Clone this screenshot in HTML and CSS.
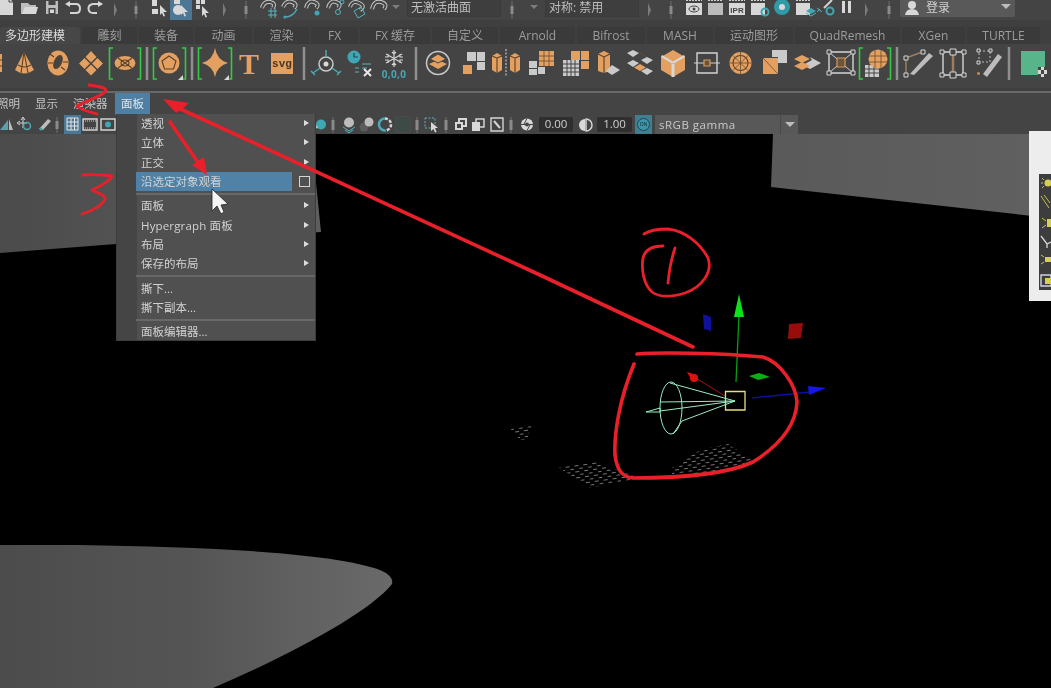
FILE: index.html
```html
<!DOCTYPE html>
<html lang="zh">
<head>
<meta charset="utf-8">
<title>Maya</title>
<link rel="stylesheet" href="styles.css">
</head>
<body>
<div class="app">

<div class="status">
  <svg class="ic w18" viewBox="0 0 18 20"><path class="wf" d="M0 -2H9L13 2V15H0Z"/><path class="dk" d="M9 -2V2H13"/></svg>
  <svg class="ic w24" viewBox="0 0 24 20"><path class="gf" d="M3 14V3H10L12 5H18V14Z"/><path class="wf" d="M4 14L7 7H20L18 14Z"/></svg>
  <svg class="ic w20" viewBox="0 0 20 20"><path class="gf" d="M4 1H16V14H4Z"/><path class="dkf" d="M6.500 1H13.500V5H6.500Z M6.500 8H13.500V14H6.500Z"/><path class="wf" d="M8 9.500H12V13H8Z"/></svg>
  <svg class="ic w22" viewBox="0 0 22 20"><path class="ln2" d="M6 4H14Q18 4 18 8.500T14 13H8"/><path class="wf" d="M3 4L8 1V7Z"/></svg>
  <svg class="ic w22" viewBox="0 0 22 20"><path class="ln2" d="M18 4H9Q4 5 4.500 9T9 13H13"/><path class="wf" d="M19 4L14 1V7Z"/></svg>
  <svg class="ic w18" viewBox="0 0 18 20"><path class="hf" d="M8 3L11 10L8 17Z"/></svg>
  <svg class="ic w24" viewBox="0 0 24 20"><path class="hb" d="M12 1V19"/><path class="hb2" d="M12 6V14"/></svg>
  <svg class="ic w22" viewBox="0 0 22 20"><path class="wf" d="M4 0H9V6H4Z"/><path class="wf" d="M4 9H10V14H4Z"/><path class="wf" d="M12 5L19 12L15.500 12L17 16L15.500 16.500L14 13L12 15Z"/></svg>
  <svg class="ic w22 act" viewBox="0 0 22 20"><circle class="wf" cx="8" cy="10" r="5"/><path class="wf" d="M4 0H10V4H4Z"/><path class="wf" d="M11 5L18 12L14.500 12L16 16L14.500 16.500L13 13L11 15Z"/></svg>
  <svg class="ic w22" viewBox="0 0 22 20"><path class="wf" d="M4 0H8V4H4ZM9 0H13V4H9ZM4 5H8V9H4Z"/><path class="wf" d="M10 6L17 13L13.500 13L15 17L13.500 17.500L12 14L10 16Z"/></svg>
  <svg class="ic w20" viewBox="0 0 20 20"><path class="hf" d="M9 3L12 10L9 17Z"/></svg>
  <svg class="ic w24" viewBox="0 0 24 20"><path class="hb" d="M12 1V19"/><path class="hb2" d="M12 6V14"/></svg>
  <svg class="ic w22" viewBox="0 0 22 20"><path class="mg" d="M4 8Q6 1 12 2T15 8"/><path class="mgi" d="M4 8Q6 1 12 2T15 8"/><path class="te1" d="M10 11H19M10 15H19M13 8V18M17 8V18"/></svg>
  <svg class="ic w22" viewBox="0 0 22 20"><path class="mg" d="M3 7Q6 0 12 2T14 8"/><path class="mgi" d="M3 7Q6 0 12 2T14 8"/><path class="te2" d="M5 17Q13 17 17 9"/><circle class="tf" cx="5" cy="17" r="1.600"/></svg>
  <svg class="ic w22" viewBox="0 0 22 20"><path class="mg" d="M4 8Q6 0 12 2T14 8"/><path class="mgi" d="M4 8Q6 0 12 2T14 8"/><circle class="tf" cx="15" cy="13" r="2.500"/></svg>
  <svg class="ic w22" viewBox="0 0 22 20"><path class="mg" d="M4 8Q6 0 12 2T14 8"/><path class="mgi" d="M4 8Q6 0 12 2T14 8"/><circle class="te1" cx="14" cy="12" r="2.500"/><circle class="te1" cx="18" cy="2" r="2"/></svg>
  <svg class="ic w22" viewBox="0 0 22 20"><path class="mg" d="M4 7Q6 0 13 3T14 10"/><path class="mgi" d="M4 7Q6 0 13 3T14 10"/><path class="te1" d="M8 11L15 7L19 14L12 18Z"/></svg>
  <svg class="ic w22" viewBox="0 0 22 20"><path class="mg" d="M4 9Q6 0 13 2T16 9"/><path class="mgi" d="M4 9Q6 0 13 2T16 9"/></svg>
  <svg class="ic w12" viewBox="0 0 12 20"><path class="hf" d="M2 5H10L6 9Z"/></svg>
  <div class="combo first">无激活曲面</div>
  <svg class="ic w22" viewBox="0 0 22 20"><path class="hb" d="M11 1V19"/><path class="hb2" d="M11 6V14"/></svg>
  <svg class="ic w22" viewBox="0 0 22 20"><path class="hf" d="M7 5H15L11 9Z"/></svg>
  <div class="combo">对称: 禁用</div>
  <svg class="ic w20" viewBox="0 0 20 20"><path class="hf" d="M9 3L12 10L9 17Z"/></svg>
  <svg class="ic w24" viewBox="0 0 24 20"><path class="hb" d="M12 1V19"/><path class="hb2" d="M12 6V14"/></svg>
  <svg class="ic w22" viewBox="0 0 22 20"><path class="clap" d="M3 0H19"/><path class="wf" d="M3 3H19V15H3Z"/><ellipse class="dk" cx="11" cy="9" rx="5" ry="3"/><circle class="dkf" cx="11" cy="9" r="1.500"/></svg>
  <svg class="ic w21" viewBox="0 0 21 20"><path class="clap" d="M3 0H18"/><path class="gf" d="M3 3H18V15H3Z"/></svg>
  <svg class="ic w22" viewBox="0 0 22 20"><path class="clap" d="M3 0H19"/><path class="wf" d="M3 3H19V15H3Z"/><text class="ipr" x="11" y="13">IPR</text></svg>
  <svg class="ic w22" viewBox="0 0 22 20"><path class="clap" d="M3 0H17"/><path class="wf" d="M3 3H17V15H3Z"/><circle class="tr" cx="17" cy="12" r="3.500"/></svg>
  <svg class="ic w23" viewBox="0 0 23 20"><circle class="tring" cx="12" cy="7" r="5.500"/></svg>
  <svg class="ic w22" viewBox="0 0 22 20"><path class="clap" d="M3 0H17"/><path class="wf" d="M3 3H17V15H3Z"/><path class="tf" d="M18 8L23 11L18 14L13 11Z"/><path class="te1" d="M13 13L18 16L23 13"/></svg>
  <svg class="ic w22" viewBox="0 0 22 20"><path class="ln2" d="M9 8L17 0"/><circle class="tr" cx="15" cy="11" r="3.500"/><path class="te1" d="M2 8L7 12M2 12L5 9"/></svg>
  <svg class="ic w18" viewBox="0 0 18 20"><path class="wf" d="M5 1H8V13H5ZM11 1H14V13H11Z"/></svg>
  <svg class="ic w22" viewBox="0 0 22 20"><path class="hf" d="M10 3L13 10L10 17Z"/></svg>
  <svg class="ic w23" viewBox="0 0 23 20"><path class="hb" d="M12 1V19"/><path class="hb2" d="M12 6V14"/></svg>
  <div class="login">
    <svg class="ic w24" viewBox="0 0 24 20"><circle class="wf" cx="12" cy="5" r="4"/><path class="wf" d="M5 15Q6 9 12 9T19 15Z"/></svg>
    <span class="login-t">登录</span>
    <svg class="ic w12 login-a" viewBox="0 0 12 20"><path class="gf" d="M1 4H11L6 9Z"/></svg>
  </div>
</div>

<div class="tabs">
  <div class="tab on">多边形建模</div>
  <div class="tab">雕刻</div>
  <div class="tab">装备</div>
  <div class="tab">动画</div>
  <div class="tab">渲染</div>
  <div class="tab">FX</div>
  <div class="tab">FX 缓存</div>
  <div class="tab">自定义</div>
  <div class="tab">Arnold</div>
  <div class="tab">Bifrost</div>
  <div class="tab">MASH</div>
  <div class="tab">运动图形</div>
  <div class="tab">QuadRemesh</div>
  <div class="tab">XGen</div>
  <div class="tab">TURTLE</div>
</div>

<div class="shelf">
  <svg class="sh w8" viewBox="0 0 8 44"><path class="o" d="M-10 10H2V28H-10Z"/><path class="dk2" d="M-10 16H2M-10 22H2"/></svg>
  <svg class="sh w33" viewBox="0 0 33 44"><path class="o" d="M16 8L7 26Q16 33 26 26Z"/><path class="dk2" d="M16 8L13 29M16 8L20 29M10 21Q16 25 23 21"/></svg>
  <svg class="sh w34" viewBox="0 0 34 44"><ellipse class="o" cx="17" cy="19" rx="10.500" ry="12.500"/><ellipse class="hole" cx="17" cy="18" rx="3.500" ry="7" transform="rotate(25 17 18)"/><path class="dk2" d="M9 10L13 13M24 26L20 23M7 19H12M22 18H27"/></svg>
  <svg class="sh w33" viewBox="0 0 33 44"><path class="o" d="M16 7L21.500 13L16 18.500L10.500 13ZM22.500 14L28 19.500L22.500 25L17 19.500ZM9.500 14L15 19.500L9.500 25L4 19.500ZM16 20.500L21.500 26L16 31.500L10.500 26Z"/></svg>
  <svg class="sh w34" viewBox="0 0 34 44"><path class="br" d="M5 4H1.500V35H5M29 4H32.500V35H29"/><ellipse class="o" cx="17" cy="19" rx="10.500" ry="7"/><path class="dk2" d="M10 14L24 24M24 14L10 24"/><ellipse class="dk2" cx="17" cy="19" rx="4" ry="3"/></svg>
  <svg class="sh w10" viewBox="0 0 10 44"><path class="sp" d="M5 3V36"/></svg>
  <svg class="sh w35" viewBox="0 0 35 44"><path class="br" d="M5 4H1.500V35H5M30 4H33.500V35H30"/><circle class="o" cx="17" cy="19" r="10.500"/><path class="dk2" d="M17 12L24 17L21.500 25H12.500L10 17Z"/><path class="wt" d="M31 31V36H26Z"/></svg>
  <svg class="sh w10" viewBox="0 0 10 44"><path class="sp" d="M5 3V36"/></svg>
  <svg class="sh w36" viewBox="0 0 36 44"><path class="br" d="M5 4H1.500V35H5M31 4H34.500V35H31"/><path class="o" d="M18 4Q20 16 31 19Q20 22 18 33Q16 22 5 19Q16 16 18 4Z"/><path class="wt" d="M32 31V36H27Z"/></svg>
  <svg class="sh w32" viewBox="0 0 32 44"><text class="bigT" x="16" y="30">T</text></svg>
  <svg class="sh w34" viewBox="0 0 34 44"><path class="o" d="M6 9H28V30H6Z"/><text class="svgt" x="17" y="23">svg</text></svg>
  <svg class="sh w10" viewBox="0 0 10 44"><path class="sp" d="M5 3V36"/></svg>
  <svg class="sh w34" viewBox="0 0 34 44"><circle class="ring" cx="17" cy="20" r="7"/><circle class="wf" cx="17" cy="20" r="2.500"/><path class="te2" d="M17 6V13M4 29L11 24M30 29L23 24M2 27L6 31M32 27L28 31"/></svg>
  <svg class="sh w34" viewBox="0 0 34 44"><circle class="tf" cx="11" cy="13" r="6.500"/><path class="hand" d="M11 9V13H15"/><path class="te1" d="M19 20H28M12 24H16M19 24H24M12 28H16"/><path class="xx" d="M21 25L28 32M28 25L21 32"/></svg>
  <svg class="sh w34" viewBox="0 0 34 44"><path class="flake" d="M17 6V23M9 10L25 19M25 10L9 19M15 8L17 10L19 8M15 21L17 19L19 21M11 10V13H8M23 10V13H26M11 19V16H8M23 19V16H26"/><text class="zero" x="17" y="34">0,0,0</text></svg>
  <svg class="sh w10" viewBox="0 0 10 44"><path class="sp" d="M5 3V36"/></svg>
  <svg class="sh w34" viewBox="0 0 34 44"><circle class="ring" cx="17" cy="19" r="11.500"/><path class="o" d="M17 16L26 20L17 25L8 20Z"/><path class="o2" d="M17 10L25 15L17 19L9 15Z"/></svg>
  <svg class="sh w34" viewBox="0 0 34 44"><path class="g" d="M12 8H21V17H12ZM22 8H30V17H22ZM22 18H30V26H22Z"/><path class="o" d="M8 21H17V30H8Z"/></svg>
  <svg class="sh w35" viewBox="0 0 35 44"><path class="o" d="M3 12L8 9L13 12V26L8 29L3 26ZM21 12L26 9L31 12V26L26 29L21 26Z"/><path class="dk2" d="M3 12L8 14V29M13 12L8 14M21 12L26 14V29M31 12L26 14"/><path class="dash" d="M17 5V33"/></svg>
  <svg class="sh w33" viewBox="0 0 33 44"><path class="o" d="M15 7H30V22H15Z"/><path class="dk1" d="M15 12H30M15 17H30M20 7V22M25 7V22"/><path class="g" d="M5 17H13V24H5ZM14 23H21V30H14ZM5 25H13V31H5Z"/></svg>
  <svg class="sh w34" viewBox="0 0 34 44"><path class="o" d="M14 7H23V16H14ZM24 7H32V16H24ZM24 17H32V25H24Z"/><path class="g" d="M6 16H22V32H6Z"/><path class="dk1g" d="M6 20H22M6 24H22M6 28H22M10 16V32M14 16V32M18 16V32"/></svg>
  <svg class="sh w33" viewBox="0 0 33 44"><path class="o" d="M7 10L13 7L19 10V27L13 29L7 27Z"/><path class="dk2" d="M13 13V29M7 10L13 13L19 10"/><path class="g" d="M21 21L29 26L21 31L15 27Z"/></svg>
  <svg class="sh w33" viewBox="0 0 33 44"><path class="g" d="M9 6L15 9L9 13L3 9ZM23 13L29 16L23 20L17 16ZM23 24L29 27L23 31L17 27ZM9 16L15 19L9 23L3 19Z"/><path class="o" d="M16 20L22 23.500L16 27L10 23.500Z"/><path class="dk1" d="M16 9L23 13"/></svg>
  <svg class="sh w33" viewBox="0 0 33 44"><path class="o" d="M16 6L28 13V26L16 33L4 26V13Z"/><path class="wf" d="M4 13L16 20L28 13L27 11L16 17.500L5 11ZM14.500 19H17.500V33H14.500Z"/></svg>
  <svg class="sh w34" viewBox="0 0 34 44"><path class="rect" d="M7 9H27V29H7Z"/><path class="ln1" d="M4 19H14M20 19H30"/><path class="oln" d="M14 16H20V22H14Z"/></svg>
  <svg class="sh w33" viewBox="0 0 33 44"><circle class="o" cx="16.500" cy="19" r="11"/><circle class="dk2" cx="16.500" cy="19" r="7.500"/><path class="dk1" d="M16.500 8V30M5.500 19H27.500M8.800 11.300L24.200 26.700M24.200 11.300L8.800 26.700"/></svg>
  <svg class="sh w33" viewBox="0 0 33 44"><path class="g" d="M15 6H30V19H21V13H15Z"/><path class="o" d="M6 14H21V30H6Z"/><path class="dk1" d="M6 14L21 30"/></svg>
  <svg class="sh w34" viewBox="0 0 34 44"><path class="g" d="M20 13L31 19L20 25L13 21L22 16Z"/><path class="o" d="M12 11L20 15L12 19L4 15Z"/><path class="o" d="M12 18L20 22L12 26L4 22Z"/></svg>
  <svg class="sh w34" viewBox="0 0 34 44"><path class="rect" d="M5 8H29V29H5Z"/><path class="ln1" d="M5 8L29 29M29 8L5 29"/><path class="oln" d="M13 14H21V23H13Z"/><path class="hnd" d="M3 6H7V10H3ZM27 6H31V10H27ZM3 27H7V31H3ZM27 27H31V31H27Z"/></svg>
  <svg class="sh w34" viewBox="0 0 34 44"><path class="br" d="M5 4H1.500V35H5M29 4H32.500V35H29"/><path class="g" d="M7 21H21V33H7Z"/><path class="dk1g" d="M7 25H21M7 29H21M11 21V33M16 21V33"/><circle class="o" cx="20" cy="15" r="9.500"/><path class="dk1" d="M11 12H29M11 18H29M17 6V24M23 6V24"/></svg>
  <svg class="sh w10" viewBox="0 0 10 44"><path class="sp" d="M5 3V36"/></svg>
  <svg class="sh w34" viewBox="0 0 34 44"><path class="brn" d="M4 14L4 31M4 14L20 8"/><path class="hnd" d="M2 12H6V16H2ZM2 29H6V33H2ZM19 6H23V10H19Z"/><path class="gf" d="M8 30L27 9L31 12L12 31Z"/></svg>
  <svg class="sh w34" viewBox="0 0 34 44"><path class="rect" d="M7 8H27V31H7Z"/><path class="brn3" d="M17 8V31"/><path class="hnd" d="M14 5H20V11H14ZM14 28H20V34H14ZM4 6H8V10H4ZM26 6H30V10H26ZM4 29H8V33H4ZM26 29H30V33H26Z"/></svg>
  <svg class="sh w34" viewBox="0 0 34 44"><path class="dashr" d="M9 7H20V18H9Z"/><path class="hnd" d="M7 5H10V8H7ZM19 5H22V8H19ZM7 17H10V20H7Z"/><path class="ofl" d="M7 28H10V31H7Z"/><path class="gf" d="M13 30L28 10L32 13L17 33Z"/></svg>
  <svg class="sh w10" viewBox="0 0 10 44"><path class="sp" d="M5 3V36"/></svg>
  <svg class="sh w37" viewBox="0 0 37 44"><path class="grn" d="M7 7H31V31H7Z"/><path class="wf" d="M24 23H33V33H24Z"/><path class="dkf" d="M24 23H27V26H24ZM30 23H33V26H30ZM27 26H30V30H27ZM24 30H27V33H24ZM30 30H33V33H30Z"/></svg>
</div>

<div class="divider"></div>

<div class="menubar">
  <span class="mi cut">照明</span>
  <span class="mi">显示</span>
  <span class="mi">渲染器</span>
  <span class="mi hi">面板</span>
</div>

<div class="tools">
  <svg class="tl w14" viewBox="0 0 14 19"><path class="bl" d="M0 15L8 5V15Z"/><path class="gf" d="M9 4L13 15H9Z"/></svg>
  <svg class="tl w22" viewBox="0 0 22 19"><path class="ln1" d="M5 8H13M9 3V13M3 8L6 6M3 8L6 10M9 2L7 5M9 2L11 5"/><circle class="te2n" cx="13" cy="11" r="3.500"/></svg>
  <svg class="tl w18" viewBox="0 0 18 19"><path class="gf" d="M3 14L12 4L15 6L7 15Z"/><circle class="tf" cx="5" cy="14" r="1.500"/></svg>
  <svg class="tl w6" viewBox="0 0 6 19"><path class="hb" d="M3 2V18"/><path class="hb2" d="M3 6V14"/></svg>
  <svg class="tl w17 act mlg" viewBox="0 0 17 19"><path class="grid" d="M3 3H14V15H3ZM3 7H14M3 11H14M7 3V15M10.500 3V15"/></svg>
  <svg class="tl w18" viewBox="0 0 18 19"><path class="rect" d="M2 4H16V15H2Z"/><path class="film" d="M2 6H16M2 13H16"/></svg>
  <svg class="tl w18" viewBox="0 0 18 19"><path class="rect" d="M2 4H16V15H2Z"/><circle class="tf" cx="9" cy="9.500" r="3"/></svg>
  <div class="hidden-gap"></div>
  <svg class="tl w14" viewBox="0 0 14 19"><circle class="tf" cx="7" cy="9.500" r="5"/><path class="gf" d="M0 14L3 10L4 13Z"/></svg>
  <svg class="tl w10" viewBox="0 0 10 19"><path class="hb" d="M5 2V18"/><path class="hb2" d="M5 5V15"/></svg>
  <svg class="tl w18 ml2" viewBox="0 0 18 19"><circle class="gf" cx="9" cy="7.500" r="5"/><path class="te1" d="M3 12L9 16L15 12M5 15L9 18L13 15"/></svg>
  <svg class="tl w18" viewBox="0 0 18 19"><circle class="dim" cx="6" cy="12" r="4.500"/><circle class="gf" cx="11" cy="7" r="4.500"/></svg>
  <svg class="tl w18" viewBox="0 0 18 19"><path class="te2t" d="M9 3.500A6 6 0 0 0 9 15.500"/><path class="wd" d="M9 3.500A6 6 0 0 1 9 15.500"/></svg>
  <div class="darkbox"></div>
  <svg class="tl w10" viewBox="0 0 10 19"><path class="hb" d="M5 2V18"/><path class="hb2" d="M5 5V15"/></svg>
  <svg class="tl w18" viewBox="0 0 18 19"><path class="dashb" d="M3 3H13V13H3Z"/><path class="wf" d="M9 7L16 13L13 13L14.500 17L13 17.500L11.500 14L9 16Z"/></svg>
  <svg class="tl w12" viewBox="0 0 12 19"><path class="hb" d="M6 2V18"/><path class="hb2" d="M6 5V15"/></svg>
  <svg class="tl w17" viewBox="0 0 17 19"><path class="wf" d="M6 3H15V12H6Z"/><path class="dkf" d="M8 5H13V10H8Z"/><path class="wf" d="M3 7H11V15H3Z"/><path class="dkf" d="M5 9H9V13H5Z"/></svg>
  <svg class="tl w18" viewBox="0 0 18 19"><path class="rectw" d="M7 4H15V12H7Z"/><path class="wf" d="M3 7H11V16H3Z"/></svg>
  <svg class="tl w18 ml1" viewBox="0 0 18 19"><path class="rect" d="M3 3H15V16H3Z"/><path class="ln2" d="M6 6L12 13"/></svg>
  <svg class="tl w10" viewBox="0 0 10 19"><path class="hb" d="M5 2V18"/><path class="hb2" d="M5 5V15"/></svg>
  <svg class="tl w21" viewBox="0 0 21 19"><circle class="wf" cx="11" cy="9.500" r="6"/><path class="dk" d="M11 3.500L8 9M17 9.500H11M11 15.500L14 10M5 9.500H11"/><circle class="dkf" cx="11" cy="9.500" r="2"/></svg>
  <div class="num">0.00</div>
  <svg class="tl w24" viewBox="0 0 24 19"><path class="wf" d="M12 4A6 6 0 0 0 12 16Z"/><path class="rectw" d="M13 4A6 6 0 0 1 13 16Z"/></svg>
  <div class="num n2">1.00</div>
  <div class="on-btn"><span class="on-c">ON</span></div>
  <div class="gamma">sRGB gamma</div>
  <div class="gamma-a"><svg class="tl w18" viewBox="0 0 18 19"><path class="gf" d="M4 7H14L9 12Z"/></svg></div>
</div>

<div class="viewport">
  <svg class="scene" viewBox="0 134 1051 554">
    <defs>
      <linearGradient id="gA" x1="0" x2="1" y1="0" y2="0"><stop offset="0" stop-color="#4b4b4b"/><stop offset="1" stop-color="#5e5e5e"/></linearGradient>
      <linearGradient id="gB" x1="0" x2="1" y1="0" y2="0"><stop offset="0" stop-color="#4c4c4c"/><stop offset=".5" stop-color="#555"/><stop offset="1" stop-color="#6a6a6a"/></linearGradient>
      <linearGradient id="gC" x1="0" x2="1" y1="0" y2="0"><stop offset="0" stop-color="#5a5a5a"/><stop offset="1" stop-color="#606060"/></linearGradient>
      <pattern id="dots" width="9" height="6" patternUnits="userSpaceOnUse" patternTransform="rotate(-8)"><path class="dotp" d="M0 1.500H4M4.500 4.500H8"/></pattern>
    </defs>
    <path fill="url(#gA)" d="M0 134H311L321 232L116 244L0 253Z"/>
    <path fill="url(#gC)" d="M773 134H1051V218L771 187Z"/>
    <path fill="url(#gB)" d="M0 545H80C200 547 330 552 380 570Q394 576 392 584C370 612 290 655 213 688H0Z"/>
    <path fill="url(#dots)" d="M510 428L532 424L527 440L520 440Z"/>
    <path fill="url(#dots)" d="M558 467L596 462L640 478L652 476L590 488Z"/>
    <path fill="url(#dots)" d="M672 468L700 450L728 444L754 461L700 475L672 474Z"/>
    <path class="gz-g" d="M736 382L739 315"/>
    <path class="f-g" d="M739 294L744 317H734Z"/>
    <path class="gz-r" d="M694 377L725 396"/>
    <circle class="f-r" cx="694" cy="378" r="4"/>
    <path class="f-r" d="M687 372L697 375L692 381Z"/>
    <path class="gz-b" d="M752 398L810 392"/>
    <path class="f-b" d="M826 388L808 386L809 395Z"/>
    <path class="f-nb" d="M703 314L711 317L711 331L704 329Z"/>
    <path class="f-nr" d="M789 324L803 323L801 338L788 339Z"/>
    <path class="f-ng" d="M749 376L759 373L770 377L758 380Z"/>
    <path class="yel" d="M725.500 391.500H745V410H725.500Z"/>
    <ellipse class="wire" cx="671" cy="408" rx="11" ry="26"/>
    <path class="wire" d="M670 383L735 401L682 421L673 434M660 402L735 401M660 411L735 401M646 412L660 408V412Z"/>
  </svg>
  <div class="sidepanel">
    <div class="sidepanel-in">
      <svg class="sicon" viewBox="0 0 12 116">
        <circle class="yf" cx="9" cy="9" r="3.500"/><path class="ys" d="M2 9H4M3 4L5 6M3 14L5 12"/>
        <path class="ys" d="M2 22L10 34M5 21L11 29"/>
        <path class="yf" d="M8 45H12V53H8Z"/><path class="ys" d="M3 44L7 47M3 54L7 51"/>
        <path class="wln" d="M2 62L8 70L12 68M8 70V74"/>
        <path class="yf" d="M6 83H12V88H6Z"/><path class="ys" d="M2 81L5 83M2 90L5 88"/>
        <path class="rect" d="M2 101H12V112H2Z"/><path class="yf" d="M6 104H12V110H6Z"/>
      </svg>
    </div>
  </div>
</div>

<div class="menu">
  <div class="row"><span>透视</span><i class="arr"></i></div>
  <div class="row"><span>立体</span><i class="arr"></i></div>
  <div class="row"><span>正交</span><i class="arr"></i></div>
  <div class="row sel"><span>沿选定对象观看</span><i class="box"></i></div>
  <div class="sepr"></div>
  <div class="row"><span>面板</span><i class="arr"></i></div>
  <div class="row"><span class="lat">Hypergraph 面板</span><i class="arr"></i></div>
  <div class="row"><span>布局</span><i class="arr"></i></div>
  <div class="row"><span>保存的布局</span><i class="arr"></i></div>
  <div class="sepr"></div>
  <div class="row"><span>撕下...</span></div>
  <div class="row"><span>撕下副本...</span></div>
  <div class="sepr"></div>
  <div class="row"><span>面板编辑器...</span></div>
</div>

<svg class="ink" viewBox="0 0 1051 688">
  <path class="red" d="M693 347L540 275L176 107"/>
  <path class="redf" d="M163 99L189 103L182 109L176 113Z"/>
  <path class="red" d="M170 122L202 168"/>
  <path class="redf" d="M207 175L192 165L204 157Z"/>
  <path class="red2" d="M89 85C96 86 105 87 106 90C105 95 88 100 77 106C80 110 90 112 97 114"/>
  <path class="red2" d="M83 175C92 174 104 175 112 176C110 182 98 187 92 190C97 193 106 195 105 199C103 205 92 211 82 214"/>
  <path class="red2" d="M644 234C650 230 660 229 668 229C685 231 700 243 708 258C713 272 702 287 685 293C672 297 660 298 652 292C644 285 641 270 643 258C645 250 652 246 663 246"/>
  <path class="red2" d="M675 248C671 260 669 272 668 283"/>
  <path class="red" d="M637 354C660 352 720 353 763 357C780 362 796 385 797 402C796 425 780 445 753 462C725 475 680 478 633 478C622 477 617 470 615 455C614 435 619 400 634 364"/>
  <path class="cursor" d="M212 189V211L217 206L221 214L224 212L221 205L228 204Z"/>
</svg>

</div>
</body>
</html>
```
FILE: styles.css
```css
* { box-sizing: border-box; }
html, body { margin: 0; padding: 0; background: #000; }
.app {
  position: relative;
  width: 1051px;
  height: 688px;
  overflow: hidden;
  display: flex;
  flex-direction: column;
  font-family: "Open Sans", "Noto Sans CJK SC", sans-serif;
  font-size: 11.500px;
  color: #c8c8c8;
  filter: blur(0.4px);
}
svg { display: block; flex: none; overflow: visible; }
.status { height: 20px; flex: none; display: flex; background: #444; }
.ic { height: 20px; }
.w6 { width: 6px; } .w8 { width: 8px; } .w10 { width: 10px; } .w12 { width: 12px; } .w14 { width: 14px; }
.w17 { width: 17px; } .w18 { width: 18px; } .w20 { width: 20px; } .w21 { width: 21px; } .w22 { width: 22px; }
.w23 { width: 23px; } .w24 { width: 24px; } .w32 { width: 32px; } .w33 { width: 33px; } .w34 { width: 34px; }
.w35 { width: 35px; } .w36 { width: 36px; } .w37 { width: 37px; }
.act { background: #4c7896; }
.combo {
  width: 94px; height: 17px;
  background: #3e3e3e; border: 1px solid #3a3a3a; border-top: 0;
  padding-left: 3px; line-height: 16px; font-size: 12px; color: #bdbdbd; white-space: nowrap;
}
.combo.first { margin-left: 5px; }
.login {
  width: 115px; height: 17px; background: #595959; display: flex; align-items: flex-start;
  border-radius: 0 0 2px 2px;
}
.login-t { font-size: 12px; line-height: 16px; color: #d0d0d0; margin-left: 2px; }
.login-a { margin-left: auto; margin-right: 3px; }

.tabs { height: 24px; flex: none; display: flex; gap: 2px; padding-top: 7px; background: #3f3f3f; }
.tab {
  height: 17px; width: 55px; flex: none; text-align: center; line-height: 17px; background: #3a3a3a; color: #9c9c9c;
  font-size: 12px; white-space: nowrap; border-radius: 3px 3px 0 0;
}
.tab.on { width: 80px; text-align: left; background: #474747; color: #dcdcdc; padding-left: 5px; }
.tab:nth-child(3) { width: 54px; }
.tab:nth-child(4) { width: 57px; }
.tab:nth-child(6) { width: 47px; }
.tab:nth-child(7) { width: 70px; }
.tab:nth-child(8) { width: 66px; }
.tab:nth-child(9) { width: 75px; }
.tab:nth-child(10) { width: 68px; }
.tab:nth-child(11) { width: 66px; }
.tab:nth-child(12) { width: 78px; }
.tab:nth-child(13) { width: 105px; }
.tab:nth-child(14) { width: 63px; }
.tab:nth-child(15) { width: 73px; }

.shelf { height: 44px; flex: none; display: flex; background: #444; overflow: hidden; }
.sh { height: 44px; }
.divider { height: 5px; flex: none; background: #3f3f3f; border-bottom: 2px solid #686868; }

.menubar { height: 22px; flex: none; display: flex; background: #444; }
.mi { padding: 0 6px; margin-right: 3px; line-height: 22px; font-size: 11.500px; color: #c4c4c4; white-space: nowrap; }
.mi.cut { margin-left: -9px; }
.mi.hi { background: #4f7fa3; color: #dfe6ec; margin-left: -1.500px; }

.tools { height: 19px; flex: none; display: flex; background: #444; }
.tl { height: 19px; }
.mlg { margin-left: 4px; }
.ml1 { margin-left: 1px; }
.ml2 { margin-left: 2px; }
.hidden-gap { width: 197px; flex: none; }
.darkbox { width: 16px; height: 17px; margin: 1px 1px; background: #3e4a45; border: 1px solid #4a4a4a; flex: none; }
.num {
  width: 34px; height: 15px; margin: 2px 0 2px 2px; background: #2f2f2f; border-radius: 2px; flex: none;
  line-height: 14px; text-align: center; font-size: 11.500px; color: #cfcfcf;
}
.num.n2 { width: 35px; margin-left: 0; }
.on-btn { width: 17px; height: 19px; margin-left: 3px; background: #3f7f90; display: flex; align-items: center; justify-content: center; flex: none; }
.on-c { width: 13px; height: 13px; border: 1px solid #22444f; border-radius: 50%; background: #3b96a8; font-size: 5px; line-height: 11px; text-align: center; color: #123; }
.gamma { width: 125px; height: 19px; margin-left: 3px; background: #585858; line-height: 19px; padding-left: 4px; font-size: 11.500px; color: #c8c8c8; letter-spacing: .5px; flex: none; }
.gamma-a { width: 18px; height: 19px; background: #585858; border-left: 1px solid #4a4a4a; flex: none; }

.viewport { position: relative; flex: 1; background: #000; min-height: 0; }
.scene { position: absolute; left: 0; top: 0; width: 1051px; height: 554px; }
.sidepanel {
  position: absolute; left: 1029px; top: -3px; width: 22px; height: 170px;
  background: #ededed; padding: 43px 0 0 10px;
}
.sidepanel-in { width: 12px; height: 116px; background: #3d3d3d; }
.sicon { width: 12px; height: 116px; }

.menu {
  position: absolute; left: 116px; top: 114px; width: 200px; height: 227px;
  background: linear-gradient(to right, #454545 0 20px, #505050 20px);
  border: 1px solid #3c3c3c; border-top: 0; padding-left: 19px;
}
.row {
  height: 19.300px; display: flex; align-items: center; justify-content: space-between;
  padding: 0 6px 1px 5px; font-size: 11.500px; color: #d2d2d2; white-space: nowrap;
}
.row.sel { background: linear-gradient(to right, #4f82a6 0 156px, transparent 156px); }
.lat { letter-spacing: .15px; }
.arr { width: 0; height: 0; border-left: 5px solid #dcdcdc; border-top: 3.500px solid transparent; border-bottom: 3.500px solid transparent; }
.box { width: 11px; height: 11px; border: 1px solid #d4d4d4; margin-right: -1px; }
.sepr { height: 2px; margin: 2px 0 0; background: #686868; }
.sepr + .row { margin-top: 1px; }

.ink { position: absolute; left: 0; top: 0; width: 1051px; height: 688px; pointer-events: none; }

/* icon paint */
.wf { fill: #d8d8d8; }
.gf { fill: #bcbcbc; }
.hf { fill: #7c7c7c; }
.dkf { fill: #444; }
.dk { fill: none; stroke: #444; stroke-width: 1; }
.dk1 { fill: none; stroke: #6a4c2e; stroke-width: .8; }
.dk1g { fill: none; stroke: #444; stroke-width: 1; }
.dk2 { fill: none; stroke: #5a4028; stroke-width: 1.100; }
.hb { stroke: #6e6e6e; stroke-width: 1; fill: none; }
.hb2 { stroke: #8a8a8a; stroke-width: 3; fill: none; }
.ln1 { fill: none; stroke: #cfcfcf; stroke-width: 1; }
.ln2 { fill: none; stroke: #d4d4d4; stroke-width: 2; }
.mg { fill: none; stroke: #c6c6c6; stroke-width: 4; }
.mgi { fill: none; stroke: #444; stroke-width: 2; }
.te1 { fill: none; stroke: #57b4bd; stroke-width: 1; }
.te2 { fill: none; stroke: #4aa9b4; stroke-width: 1.500; }
.te2n { fill: none; stroke: #4aa9b4; stroke-width: 1.500; }
.te2t { fill: none; stroke: #4aa9b4; stroke-width: 2.500; }
.wd { fill: none; stroke: #d4d4d4; stroke-width: 2.500; stroke-dasharray: 3 1.500; }
.tf { fill: #3fa6b3; }
.tr { fill: none; stroke: #3fa6b3; stroke-width: 2; }
.tring { fill: #d8d8d8; stroke: #2f9aa8; stroke-width: 5; }
.clap { fill: none; stroke: #d0d0d0; stroke-width: 2; stroke-dasharray: 2 1; }
.ipr { font: 700 8px "Liberation Sans", sans-serif; fill: #444; text-anchor: middle; }
.o { fill: #e3a060; }
.o2 { fill: #e3a060; stroke: #444; stroke-width: 1; }
.ofl { fill: #d9985a; stroke: #444; stroke-width: .6; }
.oln { fill: #6b543c; stroke: #d9985a; stroke-width: 1.200; }
.g { fill: #cacaca; }
.hole { fill: #444; stroke: #5a4028; stroke-width: 1; }
.br { fill: none; stroke: #35c944; stroke-width: 1.600; }
.sp { stroke: #8f8f8f; stroke-width: 2.500; fill: none; }
.wt { fill: #d8d8d8; }
.bigT { font: 700 30px "Liberation Serif", serif; fill: #e3a060; text-anchor: middle; }
.svgt { font: 700 11px "Liberation Mono", monospace; fill: #4a3524; text-anchor: middle; }
.ring { fill: none; stroke: #c8c8c8; stroke-width: 1.500; }
.hand { fill: none; stroke: #1f4a50; stroke-width: 1.200; }
.xx { fill: none; stroke: #e8e8e8; stroke-width: 2; }
.flake { fill: none; stroke: #d4d4d4; stroke-width: 1.200; }
.zero { font: 700 10px "Open Sans", sans-serif; fill: #47a8b5; text-anchor: middle; letter-spacing: .3px; }
.dash { fill: none; stroke: #d8d8d8; stroke-width: 1; stroke-dasharray: 2 1.500; }
.rect { fill: none; stroke: #d4d4d4; stroke-width: 1.400; }
.rectw { fill: none; stroke: #d4d4d4; stroke-width: 1.500; }
.hnd { fill: #444; stroke: #d4d4d4; stroke-width: 1; }
.brn { fill: none; stroke: #a07c5c; stroke-width: 1.500; }
.brn3 { fill: none; stroke: #a07c5c; stroke-width: 2.500; }
.dashr { fill: none; stroke: #bcbcbc; stroke-width: 1; stroke-dasharray: 2 2; }
.grn { fill: #58b48a; }
.bl { fill: #5aa0b0; }
.grid { fill: none; stroke: #e4e4e4; stroke-width: 1; }
.film { fill: none; stroke: #d4d4d4; stroke-width: 1; stroke-dasharray: 1 1; }
.dim { fill: #5c5c5c; }
.dashb { fill: none; stroke: #5fb0ba; stroke-width: 1; stroke-dasharray: 2 1.500; }

/* scene paint */
.dotp { stroke: #777; stroke-width: 1; fill: none; }
.gz-g { stroke: #0c9a14; stroke-width: 1.300; fill: none; }
.f-g { fill: #0ee01a; }
.gz-r { stroke: #a01010; stroke-width: 1; fill: none; }
.f-r { fill: #e01010; }
.gz-b { stroke: #10109a; stroke-width: 1.500; fill: none; }
.f-b { fill: #1616e8; }
.f-nb { fill: #10109a; }
.f-nr { fill: #980c0c; }
.f-ng { fill: #0eae16; }
.yel { fill: none; stroke: #e6e07a; stroke-width: 1.300; }
.wire { fill: none; stroke: #97eec4; stroke-width: 1; }
.yf { fill: #d9cf4e; }
.ys { fill: none; stroke: #c9c04a; stroke-width: 1; }
.wln { fill: none; stroke: #d8d8d8; stroke-width: 1.300; }

/* annotations */
.red { fill: none; stroke: #e9202a; stroke-width: 3.600; stroke-linecap: round; stroke-linejoin: round; }
.red2 { fill: none; stroke: #e9202a; stroke-width: 2.800; stroke-linecap: round; stroke-linejoin: round; }
.redf { fill: #e9202a; }
.cursor { fill: #f4f4f4; stroke: #222; stroke-width: .8; }
```
